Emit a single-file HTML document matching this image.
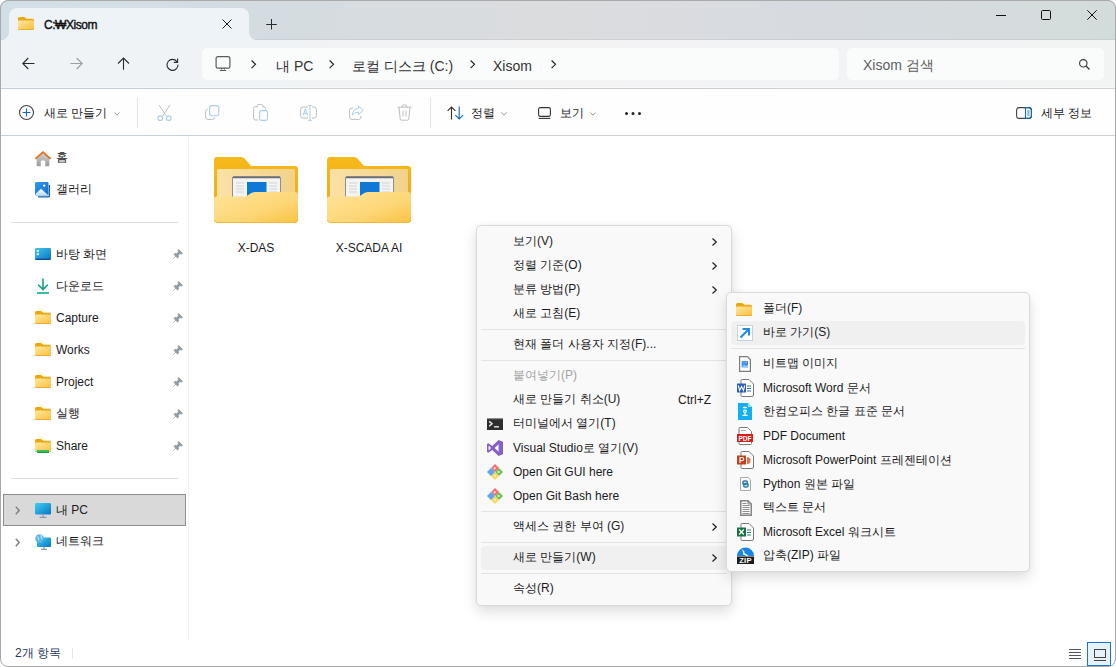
<!DOCTYPE html>
<html><head><meta charset="utf-8">
<style>
*{margin:0;padding:0;box-sizing:border-box}
html,body{width:1116px;height:667px;overflow:hidden;background:#ffffff;font-family:"Liberation Sans",sans-serif;font-size:12px;color:#1b1b1b}
#win{position:absolute;left:0;top:0;width:1116px;height:667px;border-radius:8px;overflow:hidden;background:#fff}
#frame{position:absolute;left:0;top:0;width:1116px;height:667px;border:1px solid #a9a9a9;border-radius:8px;pointer-events:none}
#title{position:absolute;left:0;top:0;width:1116px;height:40px;background:linear-gradient(90deg,#d2dee6 0%,#d4dce1 25%,#dbdcde 50%,#d7dbe1 72%,#d4dcdb 100%)}
#tline{position:absolute;left:0;top:39px;width:1116px;height:1px;background:linear-gradient(90deg,#c4d0d8 0%,#c8cfd4 25%,#cdcdcf 50%,#c9cdd3 72%,#c6cece 100%)}
#tab{position:absolute;left:9px;top:8px;width:240px;height:32px;background:#eef3f7;border-radius:8px 8px 0 0}
#tab:before,#tab:after{content:"";position:absolute;bottom:0;width:8px;height:8px;background:transparent}
#tab:before{left:-8px;border-bottom-right-radius:8px;box-shadow:4px 4px 0 4px #eef3f7}
#tab:after{right:-8px;border-bottom-left-radius:8px;box-shadow:-4px 4px 0 4px #eef3f7}
#nav{position:absolute;left:0;top:40px;width:1116px;height:48px;background:linear-gradient(90deg,#eef3f7 0%,#f0f3f5 25%,#f3f3f4 50%,#f2f3f5 72%,#f2f3f3 100%)}
#nline{position:absolute;left:0;top:88px;width:1116px;height:1px;background:linear-gradient(90deg,#c2cdd5 0%,#c8cfd3 25%,#cccbcc 50%,#cacdd2 72%,#ced3d3 100%);box-shadow:0 -1px 0 rgba(255,255,255,0.4)}
#tool{position:absolute;left:0;top:89px;width:1116px;height:46px;background:#fefefe}
#bline{position:absolute;left:0;top:135px;width:1116px;height:1px;background:linear-gradient(90deg,#c4cfd7 0%,#c9d0d4 25%,#cecdce 50%,#cbcfd3 72%,#ccd2d2 100%)}
.t{position:absolute;white-space:nowrap;line-height:14px;height:14px}
svg{position:absolute;overflow:visible}
.box{position:absolute;background:#fafbfb;border-radius:5px}
.side{position:absolute;left:0;top:135px;width:188px;height:506px;border-right:1px solid #ededed}
.hsep{position:absolute;height:1px;background:#d9d9d9}
.menu{position:absolute;background:#f9f9f9;border:1px solid #dadada;border-radius:5px;box-shadow:0 6px 14px rgba(0,0,0,0.13),0 0 4px rgba(0,0,0,0.03)}
.mi{position:absolute;left:4px;right:4px;height:24px}
.mi.hl{background:#f0f0f0;border-radius:4px}
.mi .t{top:4px}
.msep{position:absolute;left:4px;right:4px;height:1px;background:#e3e3e3}
.chev{position:absolute;width:5px;height:9px}
</style></head><body>
<div id="win">
  <div id="title"></div>
  <div id="tline"></div>
  <div id="tab"></div>
  <!-- tab folder icon -->
  <svg style="left:18px;top:17px" width="16" height="13" viewBox="0 0 16 13">
    <defs><linearGradient id="fg1" x1="0" y1="0" x2="1" y2="1"><stop offset="0" stop-color="#ffe7a2"/><stop offset="1" stop-color="#f8c23e"/></linearGradient></defs>
    <path d="M0,1.5 Q0,0 1.5,0 H5.8 Q6.8,0 7.4,0.7 L8.3,1.7 H14.6 Q16,1.7 16,3.2 V6 H0 Z" fill="#eca80b"/><rect x="0" y="3.4" width="16" height="9.6" rx="1.3" fill="#eaa31c"/><rect x="0" y="3.4" width="16" height="8.8" rx="1.2" fill="url(#fg1)"/>
  </svg>
  <div class="t" style="left:44px;top:18px;font-size:12px;letter-spacing:-0.45px;color:#111;-webkit-text-stroke:0.4px #111">C:₩Xisom</div>
  <svg style="left:222px;top:19px" width="10" height="10" viewBox="0 0 10 10"><path d="M0.5,0.5 L9.5,9.5 M9.5,0.5 L0.5,9.5" stroke="#1c1c1c" stroke-width="1"/></svg>
  <svg style="left:266px;top:19px" width="11" height="11" viewBox="0 0 11 11"><path d="M5.5,0 V10.5 M0.2,5.5 H10.8" stroke="#2a2a2a" stroke-width="1"/></svg>
  <!-- window controls -->
  <svg style="left:996px;top:14px" width="10" height="2" viewBox="0 0 10 2"><path d="M0,1.5 H10" stroke="#111" stroke-width="1"/></svg>
  <svg style="left:1041px;top:10px" width="10" height="10" viewBox="0 0 10 10"><rect x="0.5" y="0.5" width="9" height="9" rx="1" fill="none" stroke="#111" stroke-width="1"/></svg>
  <svg style="left:1087px;top:10px" width="10" height="10" viewBox="0 0 10 10"><path d="M0.3,0.3 L9.7,9.7 M9.7,0.3 L0.3,9.7" stroke="#111" stroke-width="1"/></svg>

  <div id="nav"></div>
  <div id="nline"></div>
  <!-- nav arrows -->
  <svg style="left:22px;top:57px" width="13" height="13" viewBox="0 0 13 13"><path d="M12.5,6.5 H0.8 M6.3,1 L0.8,6.5 L6.3,12" fill="none" stroke="#2b2b2b" stroke-width="1.1"/></svg>
  <svg style="left:70px;top:57px" width="13" height="13" viewBox="0 0 13 13"><path d="M0.5,6.5 H12.2 M6.7,1 L12.2,6.5 L6.7,12" fill="none" stroke="#9a9ea3" stroke-width="1.1"/></svg>
  <svg style="left:117px;top:57px" width="13" height="13" viewBox="0 0 13 13"><path d="M6.5,12.8 V1 M1,6.5 L6.5,1 L12,6.5" fill="none" stroke="#2b2b2b" stroke-width="1.1"/></svg>
  <svg style="left:166px;top:58px" width="13" height="13" viewBox="0 0 13 13"><path d="M11.2,4 A5.5,5.5 0 1 0 12,6.6" fill="none" stroke="#2b2b2b" stroke-width="1.1"/><path d="M11.6,0.6 V4.4 H7.8" fill="none" stroke="#2b2b2b" stroke-width="1.1"/></svg>
  <div class="box" style="left:202px;top:48px;width:637px;height:32px"></div>
  <svg style="left:215px;top:56px" width="16" height="15" viewBox="0 0 16 15"><rect x="1.1" y="0.6" width="13.8" height="11.6" rx="1.8" fill="none" stroke="#5a5a5a" stroke-width="1.2"/><path d="M6.6,12 V13.6 M9.4,12 V13.6" stroke="#5a5a5a" stroke-width="1.1"/><path d="M4.8,14.5 H11.2" stroke="#5a5a5a" stroke-width="1.1"/></svg>
  <svg class="chev" style="left:251px;top:60px;width:5px;height:9px" viewBox="0 0 5 9"><path d="M0.6,0.5 L4.5,4.3 L0.6,8.1" fill="none" stroke="#222" stroke-width="1.15"/></svg>
  <div class="t" style="left:276px;top:58px;font-size:14px;line-height:16px;height:16px;color:#333">내 PC</div>
  <svg class="chev" style="left:329px;top:60px;width:5px;height:9px" viewBox="0 0 5 9"><path d="M0.6,0.5 L4.5,4.3 L0.6,8.1" fill="none" stroke="#222" stroke-width="1.15"/></svg>
  <div class="t" style="left:352px;top:58px;font-size:14px;line-height:16px;height:16px;color:#333">로컬 디스크 (C:)</div>
  <svg class="chev" style="left:470px;top:60px;width:5px;height:9px" viewBox="0 0 5 9"><path d="M0.6,0.5 L4.5,4.3 L0.6,8.1" fill="none" stroke="#222" stroke-width="1.15"/></svg>
  <div class="t" style="left:493px;top:58px;font-size:14px;line-height:16px;height:16px;color:#333">Xisom</div>
  <svg class="chev" style="left:551px;top:60px;width:5px;height:9px" viewBox="0 0 5 9"><path d="M0.6,0.5 L4.5,4.3 L0.6,8.1" fill="none" stroke="#222" stroke-width="1.15"/></svg>
  <div class="box" style="left:847px;top:48px;width:257px;height:32px"></div>
  <div class="t" style="left:863px;top:57px;font-size:14px;line-height:16px;height:16px;color:#606060">Xisom 검색</div>
  <svg style="left:1079px;top:59px" width="11" height="11" viewBox="0 0 11 11"><circle cx="4.3" cy="4.3" r="3.7" fill="none" stroke="#333" stroke-width="1.1"/><path d="M7,7 L10.5,10.5" stroke="#333" stroke-width="1.2"/></svg>

  <div id="tool"></div>
  <div id="bline"></div>
  <!-- toolbar -->
  <svg style="left:19px;top:105px" width="16" height="16" viewBox="0 0 16 16"><circle cx="7.5" cy="7.5" r="7" fill="none" stroke="#444" stroke-width="1.1"/><path d="M7.5,3.6 V11.4 M3.6,7.5 H11.4" stroke="#0f6cbd" stroke-width="1.15"/></svg>
  <div class="t" style="left:44px;top:106px">새로 만들기</div>
  <svg style="left:114px;top:112px" width="6" height="4" viewBox="0 0 6 4"><path d="M0.4,0.5 L3,3.2 L5.6,0.5" fill="none" stroke="#8a8a8a" stroke-width="0.9"/></svg>
  <div style="position:absolute;left:137px;top:97px;width:1px;height:31px;background:#e6e6e6"></div>
  <!-- cut -->
  <svg style="left:157px;top:105px" width="15" height="16" viewBox="0 0 15 16"><path d="M2,0 L9.3,11 M13,0 L5.7,11" stroke="#bdbdbd" stroke-width="1"/><circle cx="3.2" cy="13.2" r="2.3" fill="none" stroke="#a9cdee" stroke-width="1.1"/><circle cx="11.8" cy="13.2" r="2.3" fill="none" stroke="#a9cdee" stroke-width="1.1"/></svg>
  <!-- copy -->
  <svg style="left:205px;top:105px" width="15" height="15" viewBox="0 0 15 15"><path d="M2.8,4 Q0.6,4.2 0.6,6.5 V12 Q0.6,14.4 3,14.4 H7.5 Q9.6,14.4 10,12.3" fill="none" stroke="#bdbdbd" stroke-width="1"/><rect x="4.6" y="0.6" width="9.2" height="10.2" rx="2.2" fill="none" stroke="#a9cdee" stroke-width="1.1"/></svg>
  <!-- paste -->
  <svg style="left:253px;top:104px" width="15" height="17" viewBox="0 0 15 17"><path d="M3.5,2.5 H2.5 Q0.6,2.5 0.6,4.5 V14 Q0.6,16 2.5,16 H5 M10.5,2.5 Q12.5,2.5 12.5,4.5 V5.5 M4,3.5 V1.8 Q4,0.6 5.2,0.6 H8.8 Q10,0.6 10,1.8 V3.5" fill="none" stroke="#bdbdbd" stroke-width="1"/><rect x="6.6" y="6.6" width="7.8" height="9.8" rx="1.8" fill="none" stroke="#a9cdee" stroke-width="1.1"/></svg>
  <!-- rename -->
  <svg style="left:300px;top:105px" width="17" height="16" viewBox="0 0 17 16"><path d="M8,2 H3 Q0.6,2 0.6,4.4 V10.6 Q0.6,13 3,13 H8 M12,2 H14 Q16.4,2 16.4,4.4 V10.6 Q16.4,13 14,13 H12" fill="none" stroke="#bdbdbd" stroke-width="1"/><path d="M10,0.6 V15.4 M8.3,0.6 H11.7 M8.3,15.4 H11.7 M3,10.5 L5.4,4 L7.8,10.5 M3.9,8.3 H6.9" fill="none" stroke="#a9cdee" stroke-width="1"/></svg>
  <!-- share -->
  <svg style="left:349px;top:105px" width="15" height="15" viewBox="0 0 15 15"><path d="M4,3 H3 Q0.6,3 0.6,5.4 V12 Q0.6,14.4 3,14.4 H9.6 Q12,14.4 12,12 V11" fill="none" stroke="#bdbdbd" stroke-width="1"/><path d="M9.5,1 L14.2,5.4 L9.5,9.6 V7.3 Q5,7 3.2,10.2 Q3.8,3.8 9.5,3.6 Z" fill="none" stroke="#a9cdee" stroke-width="1"/></svg>
  <!-- delete -->
  <svg style="left:397px;top:104px" width="15" height="17" viewBox="0 0 15 17"><path d="M0.6,3.2 H14.4 M5,3 Q5,0.8 7.5,0.8 Q10,0.8 10,3 M2,3.2 L3.2,15 Q3.4,16.2 4.6,16.2 H10.4 Q11.6,16.2 11.8,15 L13,3.2 M6,6.5 V12.5 M9,6.5 V12.5" fill="none" stroke="#bdbdbd" stroke-width="1"/></svg>
  <div style="position:absolute;left:430px;top:97px;width:1px;height:31px;background:#e6e6e6"></div>
  <!-- sort -->
  <svg style="left:447px;top:106px" width="17" height="14" viewBox="0 0 17 14"><path d="M4.5,13.5 V1 M0.6,4.9 L4.5,1 L8.4,4.9" fill="none" stroke="#333" stroke-width="1.1"/><path d="M12.2,0.5 V13 M8.3,9.1 L12.2,13 L16.1,9.1" fill="none" stroke="#0f6cbd" stroke-width="1.1"/></svg>
  <div class="t" style="left:471px;top:106px">정렬</div>
  <svg style="left:501px;top:112px" width="6" height="4" viewBox="0 0 6 4"><path d="M0.4,0.5 L3,3.2 L5.6,0.5" fill="none" stroke="#8a8a8a" stroke-width="0.9"/></svg>
  <!-- view -->
  <svg style="left:538px;top:107px" width="13" height="12" viewBox="0 0 13 12"><rect x="0.6" y="0.6" width="11.8" height="8.8" rx="1.6" fill="none" stroke="#333" stroke-width="1.1"/><path d="M0.8,11.4 H12.2" stroke="#333" stroke-width="1.1"/></svg>
  <div class="t" style="left:560px;top:106px">보기</div>
  <svg style="left:590px;top:112px" width="6" height="4" viewBox="0 0 6 4"><path d="M0.4,0.5 L3,3.2 L5.6,0.5" fill="none" stroke="#8a8a8a" stroke-width="0.9"/></svg>
  <svg style="left:625px;top:112px" width="16" height="3" viewBox="0 0 16 3"><circle cx="1.5" cy="1.5" r="1.5" fill="#222"/><circle cx="8" cy="1.5" r="1.5" fill="#222"/><circle cx="14.5" cy="1.5" r="1.5" fill="#222"/></svg>
  <!-- details -->
  <svg style="left:1016px;top:107px" width="16" height="12" viewBox="0 0 16 12"><rect x="0.6" y="0.6" width="14.8" height="10.8" rx="2.4" fill="none" stroke="#444" stroke-width="1.1"/><path d="M9.5,0.6 H13 Q15.4,0.6 15.4,3 V9 Q15.4,11.4 13,11.4 H9.5 Z" fill="none" stroke="#0f6cbd" stroke-width="1.1"/><path d="M11.2,4 H13.6 M11.2,6 H13.6 M11.2,8 H13.6" stroke="#0f6cbd" stroke-width="0.9"/></svg>
  <div class="t" style="left:1041px;top:106px">세부 정보</div>
  <!-- sidebar -->
  <div style="position:absolute;left:188px;top:137px;width:1px;height:504px;background:#f2f2f2"></div>
  <svg style="left:35px;top:151px" width="16" height="16" viewBox="0 0 16 16">
    <defs><linearGradient id="hg" x1="0" y1="0" x2="0" y2="1"><stop offset="0" stop-color="#d2d2d2"/><stop offset="1" stop-color="#9c9c9c"/></linearGradient></defs>
    <path d="M1.6,7 L8,1.6 L14.4,7 V14.2 Q14.4,15.2 13.4,15.2 H10.2 V10.6 Q10.2,9.6 9.2,9.6 H6.8 Q5.8,9.6 5.8,10.6 V15.2 H2.6 Q1.6,15.2 1.6,14.2 Z" fill="url(#hg)"/>
    <path d="M0.9,7.4 L8,1.1 L15.1,7.4" fill="none" stroke="#e8731c" stroke-width="1.9" stroke-linecap="round" stroke-linejoin="round"/>
  </svg>
  <div class="t" style="left:56px;top:150px">홈</div>
  <svg style="left:35px;top:182px" width="16" height="16" viewBox="0 0 16 16">
    <defs><linearGradient id="gg" x1="0" y1="0" x2="1" y2="1"><stop offset="0" stop-color="#2f9cf0"/><stop offset="1" stop-color="#1368c4"/></linearGradient>
    <linearGradient id="gm" x1="0" y1="0" x2="0" y2="1"><stop offset="0" stop-color="#ffffff"/><stop offset="1" stop-color="#b9dcf7"/></linearGradient></defs>
    <path d="M15,3 V14 Q15,15.5 13.5,15.5 H3 V14.2 H13.2 Q13.8,14.2 13.8,13.6 V3 Z" fill="#1560b8"/>
    <rect x="0" y="0" width="13.5" height="13.5" rx="1.2" fill="url(#gg)"/>
    <path d="M0.5,12 L6,6.8 L12.8,12.8 V13.5 H0.5 Z" fill="url(#gm)"/>
    <circle cx="9.2" cy="3.6" r="1.2" fill="#fff"/>
  </svg>
  <div class="t" style="left:56px;top:182px">갤러리</div>
  <div class="hsep" style="left:11px;top:222px;width:167px;background:#dcdcdc"></div>

  <svg style="left:35px;top:248px" width="16" height="12" viewBox="0 0 16 12">
    <defs><linearGradient id="dg" x1="0" y1="0" x2="1" y2="1"><stop offset="0" stop-color="#41c6ec"/><stop offset="1" stop-color="#0e72c6"/></linearGradient></defs>
    <rect x="0" y="0" width="16" height="12" rx="1.4" fill="url(#dg)"/>
    <rect x="0.5" y="10.6" width="15" height="1.4" fill="#0b4f93"/>
    <rect x="1.8" y="2" width="2" height="2" fill="#f2fbff"/><rect x="1.8" y="5.2" width="2" height="2" fill="#f2fbff"/>
  </svg>
  <div class="t" style="left:56px;top:247px">바탕 화면</div>
  <svg style="left:37px;top:278px" width="12" height="16" viewBox="0 0 12 16"><path d="M6,0.5 V11.5 M1.2,6.8 L6,11.6 L10.8,6.8" fill="none" stroke="#16a085" stroke-width="1.6"/><path d="M0,15 H12" stroke="#1db993" stroke-width="1.8"/></svg>
  <div class="t" style="left:56px;top:279px">다운로드</div>

  <svg style="left:35px;top:311px" width="16" height="13" viewBox="0 0 16 13"><path d="M0,1.5 Q0,0 1.5,0 H5.8 Q6.8,0 7.4,0.7 L8.3,1.7 H14.6 Q16,1.7 16,3.2 V6 H0 Z" fill="#eca80b"/><rect x="0" y="3.4" width="16" height="9.6" rx="1.3" fill="#eaa31c"/><rect x="0" y="3.4" width="16" height="8.8" rx="1.2" fill="url(#fg1)"/></svg>
  <div class="t" style="left:56px;top:311px">Capture</div>
  <svg style="left:35px;top:343px" width="16" height="13" viewBox="0 0 16 13"><path d="M0,1.5 Q0,0 1.5,0 H5.8 Q6.8,0 7.4,0.7 L8.3,1.7 H14.6 Q16,1.7 16,3.2 V6 H0 Z" fill="#eca80b"/><rect x="0" y="3.4" width="16" height="9.6" rx="1.3" fill="#eaa31c"/><rect x="0" y="3.4" width="16" height="8.8" rx="1.2" fill="url(#fg1)"/></svg>
  <div class="t" style="left:56px;top:343px">Works</div>
  <svg style="left:35px;top:375px" width="16" height="13" viewBox="0 0 16 13"><path d="M0,1.5 Q0,0 1.5,0 H5.8 Q6.8,0 7.4,0.7 L8.3,1.7 H14.6 Q16,1.7 16,3.2 V6 H0 Z" fill="#eca80b"/><rect x="0" y="3.4" width="16" height="9.6" rx="1.3" fill="#eaa31c"/><rect x="0" y="3.4" width="16" height="8.8" rx="1.2" fill="url(#fg1)"/></svg>
  <div class="t" style="left:56px;top:375px">Project</div>
  <svg style="left:35px;top:407px" width="16" height="13" viewBox="0 0 16 13"><path d="M0,1.5 Q0,0 1.5,0 H5.8 Q6.8,0 7.4,0.7 L8.3,1.7 H14.6 Q16,1.7 16,3.2 V6 H0 Z" fill="#eca80b"/><rect x="0" y="3.4" width="16" height="9.6" rx="1.3" fill="#eaa31c"/><rect x="0" y="3.4" width="16" height="8.8" rx="1.2" fill="url(#fg1)"/></svg>
  <div class="t" style="left:56px;top:406px">실행</div>
  <svg style="left:35px;top:439px" width="16" height="14" viewBox="0 0 16 14"><path d="M0,1.5 Q0,0 1.5,0 H5.8 Q6.8,0 7.4,0.7 L8.3,1.7 H14.6 Q16,1.7 16,3.2 V6 H0 Z" fill="#eca80b"/><rect x="0" y="3.4" width="16" height="9.6" rx="1.3" fill="#eaa31c"/><rect x="0" y="3.4" width="16" height="8.8" rx="1.2" fill="url(#fg1)"/><rect x="0" y="12.2" width="16" height="0.8" fill="#bdbdbd"/><rect x="2" y="11" width="12" height="3" rx="0.8" fill="#35c45a"/><rect x="2" y="12.8" width="12" height="1.2" fill="#1f9b3e"/></svg>
  <div class="t" style="left:56px;top:439px">Share</div>
  <!-- pins -->
  <svg style="left:173px;top:249px" width="10" height="10" viewBox="0 0 10 10"><path d="M5.6,0.4 L9.6,4.4 L8.4,5 L6.8,4.6 L5.2,6.6 L5.4,8.4 L4.6,9 L1,5.4 L1.6,4.6 L3.4,4.8 L5.4,3.2 L5,1.6 Z M3,7 L0.4,9.6" fill="#8e9ba4" stroke="#8e9ba4" stroke-width="0.8" stroke-linejoin="round"/></svg>
  <svg style="left:173px;top:281px" width="10" height="10" viewBox="0 0 10 10"><path d="M5.6,0.4 L9.6,4.4 L8.4,5 L6.8,4.6 L5.2,6.6 L5.4,8.4 L4.6,9 L1,5.4 L1.6,4.6 L3.4,4.8 L5.4,3.2 L5,1.6 Z M3,7 L0.4,9.6" fill="#8e9ba4" stroke="#8e9ba4" stroke-width="0.8" stroke-linejoin="round"/></svg>
  <svg style="left:173px;top:313px" width="10" height="10" viewBox="0 0 10 10"><path d="M5.6,0.4 L9.6,4.4 L8.4,5 L6.8,4.6 L5.2,6.6 L5.4,8.4 L4.6,9 L1,5.4 L1.6,4.6 L3.4,4.8 L5.4,3.2 L5,1.6 Z M3,7 L0.4,9.6" fill="#8e9ba4" stroke="#8e9ba4" stroke-width="0.8" stroke-linejoin="round"/></svg>
  <svg style="left:173px;top:345px" width="10" height="10" viewBox="0 0 10 10"><path d="M5.6,0.4 L9.6,4.4 L8.4,5 L6.8,4.6 L5.2,6.6 L5.4,8.4 L4.6,9 L1,5.4 L1.6,4.6 L3.4,4.8 L5.4,3.2 L5,1.6 Z M3,7 L0.4,9.6" fill="#8e9ba4" stroke="#8e9ba4" stroke-width="0.8" stroke-linejoin="round"/></svg>
  <svg style="left:173px;top:377px" width="10" height="10" viewBox="0 0 10 10"><path d="M5.6,0.4 L9.6,4.4 L8.4,5 L6.8,4.6 L5.2,6.6 L5.4,8.4 L4.6,9 L1,5.4 L1.6,4.6 L3.4,4.8 L5.4,3.2 L5,1.6 Z M3,7 L0.4,9.6" fill="#8e9ba4" stroke="#8e9ba4" stroke-width="0.8" stroke-linejoin="round"/></svg>
  <svg style="left:173px;top:409px" width="10" height="10" viewBox="0 0 10 10"><path d="M5.6,0.4 L9.6,4.4 L8.4,5 L6.8,4.6 L5.2,6.6 L5.4,8.4 L4.6,9 L1,5.4 L1.6,4.6 L3.4,4.8 L5.4,3.2 L5,1.6 Z M3,7 L0.4,9.6" fill="#8e9ba4" stroke="#8e9ba4" stroke-width="0.8" stroke-linejoin="round"/></svg>
  <svg style="left:173px;top:441px" width="10" height="10" viewBox="0 0 10 10"><path d="M5.6,0.4 L9.6,4.4 L8.4,5 L6.8,4.6 L5.2,6.6 L5.4,8.4 L4.6,9 L1,5.4 L1.6,4.6 L3.4,4.8 L5.4,3.2 L5,1.6 Z M3,7 L0.4,9.6" fill="#8e9ba4" stroke="#8e9ba4" stroke-width="0.8" stroke-linejoin="round"/></svg>
  <div class="hsep" style="left:11px;top:478px;width:167px;background:#dcdcdc"></div>

  <div style="position:absolute;left:3px;top:494px;width:183px;height:32px;background:#d9d9d9;border:1px solid #8e8e8e"></div>
  <svg class="chev" style="left:15px;top:506px" viewBox="0 0 5 9"><path d="M0.8,0.8 L4.2,4.5 L0.8,8.2" fill="none" stroke="#7e7e7e" stroke-width="1.4"/></svg>
  <svg style="left:35px;top:503px" width="16" height="15" viewBox="0 0 16 15">
    <defs><linearGradient id="mg" x1="0" y1="0" x2="1" y2="1"><stop offset="0" stop-color="#3fd0f0"/><stop offset="1" stop-color="#0a74c9"/></linearGradient></defs>
    <rect x="0" y="0" width="16" height="11.5" rx="1.2" fill="url(#mg)"/><path d="M8,11.5 V14 M4.5,14.4 H11.5" stroke="#8a9aa6" stroke-width="1.2"/>
  </svg>
  <div class="t" style="left:56px;top:503px">내 PC</div>
  <svg class="chev" style="left:15px;top:538px" viewBox="0 0 5 9"><path d="M0.8,0.8 L4.2,4.5 L0.8,8.2" fill="none" stroke="#7e7e7e" stroke-width="1.4"/></svg>
  <svg style="left:35px;top:534px" width="16" height="16" viewBox="0 0 16 16">
    <rect x="2" y="3.5" width="14" height="9.5" rx="1" fill="url(#mg)"/><path d="M9,13 V15 M6,15.4 H12" stroke="#8a9aa6" stroke-width="1.2"/>
    <circle cx="4.5" cy="4.5" r="4.3" fill="#5fb6e8"/><path d="M2,2.5 Q4,4 3.5,6 M6,1 Q5.5,3.5 7.5,5" fill="none" stroke="#d8eefa" stroke-width="1"/>
  </svg>
  <div class="t" style="left:56px;top:534px">네트워크</div>

  <!-- status bar -->
  <div class="t" style="left:15px;top:646px;color:#1f3a5a">2개 항목</div>
  <div style="position:absolute;left:72px;top:648px;width:1px;height:11px;background:#e6e6e6"></div>
  <svg style="left:1069px;top:649px" width="12" height="10" viewBox="0 0 12 10"><path d="M0,0.5 H12 M0,3.5 H12 M0,6.5 H12 M0,9.5 H12" stroke="#555" stroke-width="1"/></svg>
  <div style="position:absolute;left:1087px;top:642px;width:24px;height:24px;background:#e5f1fb;border:1px solid #0f78d4"></div>
  <svg style="left:1094px;top:649px" width="12" height="12" viewBox="0 0 12 12"><rect x="0.5" y="0.5" width="11" height="8" fill="none" stroke="#444" stroke-width="1"/><path d="M0,11.5 H12" stroke="#444" stroke-width="1"/></svg>
  <!-- big folders -->
  <svg width="0" height="0" style="position:absolute">
    <defs>
      <linearGradient id="bfb" x1="0" y1="0" x2="0" y2="1"><stop offset="0" stop-color="#f6b91b"/><stop offset="1" stop-color="#eeaa12"/></linearGradient>
      <linearGradient id="bpp" x1="0" y1="0" x2="1" y2="0"><stop offset="0" stop-color="#fbe1a6"/><stop offset="1" stop-color="#f2d28a"/></linearGradient>
      <linearGradient id="bff" x1="0" y1="0" x2="1" y2="1"><stop offset="0" stop-color="#ffe49a"/><stop offset="0.6" stop-color="#fdd676"/><stop offset="1" stop-color="#f8c343"/></linearGradient>
      
    </defs>
  </svg>
  <svg style="left:214px;top:157px" width="84" height="66" viewBox="0 0 84 66">
        <path d="M0,3 Q0,0 3,0 H27 Q29,0 30.5,1.5 L37,9 H81 Q84,9 84,12 V60 H0 Z" fill="url(#bfb)"/>
        <rect x="3" y="12" width="78" height="40" rx="1.5" fill="url(#bpp)"/>
        <rect x="18.5" y="19.5" width="48" height="28" rx="1.5" fill="#f3f3f3" stroke="#8f8f8f" stroke-width="1"/>
        <path d="M19,20.5 H66" stroke="#6c6c6c" stroke-width="1.5"/>
        <rect x="33" y="25" width="19.5" height="16" fill="#0f78d4"/>
        <path d="M22,26 H30 M22,29 H30 M22,32 H30 M22,35 H30 M55,26 H63 M55,29 H63 M55,32 H63 M55,35 H63" stroke="#d4d4d4" stroke-width="1.2"/>
        <path d="M0,42 Q0,39.5 2.5,39.5 H30 Q33,39.5 35,37.5 Q37.5,35 41,35 H81 Q84,35 84,38 V62.5 Q84,65.5 81,65.5 H3 Q0,65.5 0,62.5 Z" fill="url(#bff)"/>
        <path d="M0.5,63 Q1,65.5 3,65.5 H81 Q83.5,65.5 84,63" fill="none" stroke="#f0b73a" stroke-width="1"/>
      </svg>
  <svg style="left:327px;top:157px" width="84" height="66" viewBox="0 0 84 66">
        <path d="M0,3 Q0,0 3,0 H27 Q29,0 30.5,1.5 L37,9 H81 Q84,9 84,12 V60 H0 Z" fill="url(#bfb)"/>
        <rect x="3" y="12" width="78" height="40" rx="1.5" fill="url(#bpp)"/>
        <rect x="18.5" y="19.5" width="48" height="28" rx="1.5" fill="#f3f3f3" stroke="#8f8f8f" stroke-width="1"/>
        <path d="M19,20.5 H66" stroke="#6c6c6c" stroke-width="1.5"/>
        <rect x="33" y="25" width="19.5" height="16" fill="#0f78d4"/>
        <path d="M22,26 H30 M22,29 H30 M22,32 H30 M22,35 H30 M55,26 H63 M55,29 H63 M55,32 H63 M55,35 H63" stroke="#d4d4d4" stroke-width="1.2"/>
        <path d="M0,42 Q0,39.5 2.5,39.5 H30 Q33,39.5 35,37.5 Q37.5,35 41,35 H81 Q84,35 84,38 V62.5 Q84,65.5 81,65.5 H3 Q0,65.5 0,62.5 Z" fill="url(#bff)"/>
        <path d="M0.5,63 Q1,65.5 3,65.5 H81 Q83.5,65.5 84,63" fill="none" stroke="#f0b73a" stroke-width="1"/>
      </svg>
  <div class="t" style="left:206px;top:241px;width:100px;text-align:center">X-DAS</div>
  <div class="t" style="left:319px;top:241px;width:100px;text-align:center">X-SCADA AI</div>
  <!-- context menu -->
  <div class="menu" style="left:476px;top:225px;width:256px;height:381px">
    <div class="mi" style="top:4px"><div class="t" style="left:32px">보기(V)</div><svg class="chev" style="left:231px;top:8px;width:5px;height:8px" viewBox="0 0 5 8"><path d="M0.5,0.5 L4.3,4 L0.5,7.5" fill="none" stroke="#1a1a1a" stroke-width="1.15"/></svg></div>
    <div class="mi" style="top:28px"><div class="t" style="left:32px">정렬 기준(O)</div><svg class="chev" style="left:231px;top:8px;width:5px;height:8px" viewBox="0 0 5 8"><path d="M0.5,0.5 L4.3,4 L0.5,7.5" fill="none" stroke="#1a1a1a" stroke-width="1.15"/></svg></div>
    <div class="mi" style="top:52px"><div class="t" style="left:32px">분류 방법(P)</div><svg class="chev" style="left:231px;top:8px;width:5px;height:8px" viewBox="0 0 5 8"><path d="M0.5,0.5 L4.3,4 L0.5,7.5" fill="none" stroke="#1a1a1a" stroke-width="1.15"/></svg></div>
    <div class="mi" style="top:76px"><div class="t" style="left:32px">새로 고침(E)</div></div>
    <div class="msep" style="top:103px"></div>
    <div class="mi" style="top:107px"><div class="t" style="left:32px">현재 폴더 사용자 지정(F)...</div></div>
    <div class="msep" style="top:134px"></div>
    <div class="mi" style="top:138px"><div class="t" style="left:32px;color:#a3a3a3">붙여넣기(P)</div></div>
    <div class="mi" style="top:162px"><div class="t" style="left:32px">새로 만들기 취소(U)</div><div class="t" style="right:16px;top:5px">Ctrl+Z</div></div>
    <div class="mi" style="top:186px"><svg style="left:6px;top:6px" width="16" height="12" viewBox="0 0 16 12"><rect x="0" y="0" width="16" height="12" fill="#2e2e2e"/><rect x="0" y="0" width="16" height="1.2" fill="#8c8c8c"/><path d="M2.2,3.4 L5,5.8 L2.2,8.2" fill="none" stroke="#e8e8e8" stroke-width="1.5"/><path d="M7,8.8 H12" stroke="#e8e8e8" stroke-width="1.4"/></svg><div class="t" style="left:32px">터미널에서 열기(T)</div></div>
    <div class="mi" style="top:210px"><svg style="left:6px;top:4px" width="16" height="16" viewBox="0 0 16 16"><path d="M11.6,0 L16,1.8 V14.2 L11.6,16 L5.2,9.9 L1.4,12.8 L0,12.1 V3.9 L1.4,3.2 L5.2,6.1 Z M11.6,4.2 L7.6,8 L11.6,11.8 Z M1.6,5.4 V10.6 L4,8 Z" fill="#8661c5" fill-rule="evenodd"/></svg><div class="t" style="left:32px;top:5px">Visual Studio로 열기(V)</div></div>
    <div class="mi" style="top:234px"><svg style="left:6px;top:4px" width="16" height="16" viewBox="0 0 16 16"><path d="M8,0 L12,4 L8,8 L4,4 Z" fill="#f46d6d"/><path d="M12,4 L16,8 L12,12 L8,8 Z" fill="#6cc24a"/><path d="M8,8 L12,12 L8,16 L4,12 Z" fill="#fcd65a"/><path d="M4,4 L8,8 L4,12 L0,8 Z" fill="#5ea4f2"/><circle cx="7.6" cy="4.2" r="1" fill="#fff"/><circle cx="11.6" cy="8" r="1" fill="#fff"/><circle cx="8" cy="11.8" r="0.9" fill="#fff"/></svg><div class="t" style="left:32px;top:5px">Open Git GUI here</div></div>
    <div class="mi" style="top:258px"><svg style="left:6px;top:4px" width="16" height="16" viewBox="0 0 16 16"><path d="M8,0 L12,4 L8,8 L4,4 Z" fill="#f46d6d"/><path d="M12,4 L16,8 L12,12 L8,8 Z" fill="#6cc24a"/><path d="M8,8 L12,12 L8,16 L4,12 Z" fill="#fcd65a"/><path d="M4,4 L8,8 L4,12 L0,8 Z" fill="#5ea4f2"/><circle cx="7.6" cy="4.2" r="1" fill="#fff"/><circle cx="11.6" cy="8" r="1" fill="#fff"/><circle cx="8" cy="11.8" r="0.9" fill="#fff"/></svg><div class="t" style="left:32px;top:5px">Open Git Bash here</div></div>
    <div class="msep" style="top:285px"></div>
    <div class="mi" style="top:289px"><div class="t" style="left:32px">액세스 권한 부여 (G)</div><svg class="chev" style="left:231px;top:8px;width:5px;height:8px" viewBox="0 0 5 8"><path d="M0.5,0.5 L4.3,4 L0.5,7.5" fill="none" stroke="#1a1a1a" stroke-width="1.15"/></svg></div>
    <div class="msep" style="top:316px"></div>
    <div class="mi hl" style="top:320px"><div class="t" style="left:32px">새로 만들기(W)</div><svg class="chev" style="left:231px;top:8px;width:5px;height:8px" viewBox="0 0 5 8"><path d="M0.5,0.5 L4.3,4 L0.5,7.5" fill="none" stroke="#1a1a1a" stroke-width="1.15"/></svg></div>
    <div class="msep" style="top:347px"></div>
    <div class="mi" style="top:351px"><div class="t" style="left:32px">속성(R)</div></div>
  </div>
  <!-- submenu -->
  <div class="menu" style="left:726px;top:292px;width:304px;height:280px">
    <div class="mi" style="top:4px"><svg style="left:5px;top:6px" width="16" height="13" viewBox="0 0 16 13"><path d="M0,1.5 Q0,0 1.5,0 H5.8 Q6.8,0 7.4,0.7 L8.3,1.7 H14.6 Q16,1.7 16,3.2 V6 H0 Z" fill="#eca80b"/><rect x="0" y="3.4" width="16" height="9.6" rx="1.3" fill="#eaa31c"/><rect x="0" y="3.4" width="16" height="8.8" rx="1.2" fill="url(#fg1)"/></svg><div class="t" style="left:32px">폴더(F)</div></div>
    <div class="mi hl" style="top:28px"><svg style="left:6px;top:4px" width="16" height="16" viewBox="0 0 16 16"><rect x="0.5" y="0.5" width="15" height="15" fill="#fff" stroke="#c8d0dc" stroke-width="1"/><path d="M3.5,12.5 L11.5,4.5 M5.5,4 H12 V10.5" fill="none" stroke="#1e88e5" stroke-width="2"/></svg><div class="t" style="left:32px">바로 가기(S)</div></div>
    <div class="msep" style="top:55px"></div>
    <div class="mi" style="top:59px"><svg style="left:8px;top:4px" width="12" height="16" viewBox="0 0 12 16"><defs><linearGradient id="bm" x1="0" y1="0" x2="1" y2="1"><stop offset="0" stop-color="#4cb0f5"/><stop offset="1" stop-color="#2a6fd6"/></linearGradient></defs><path d="M0.6,0.6 H8.4 L11.4,3.6 V15.4 H0.6 Z" fill="#fff" stroke="#7c7c7c" stroke-width="1.2"/><rect x="2.6" y="5" width="6.4" height="6.4" fill="url(#bm)"/><path d="M2.6,11.4 L5.2,8.6 L7,10 L9,8.4 V11.4 Z" fill="#8fd0ff"/><circle cx="7.4" cy="6.6" r="0.8" fill="#ff9ad0"/></svg><div class="t" style="left:32px">비트맵 이미지</div></div>
    <div class="mi" style="top:83px"><svg style="left:6px;top:3px" width="17" height="18" viewBox="0 0 17 18"><path d="M5,0.5 H12 L16.5,5 V16 Q16.5,17.5 15,17.5 H5 Q4,17.5 4,16.5 V1.5 Q4,0.5 5,0.5 Z" fill="#fff" stroke="#7a7a7a" stroke-width="1"/><path d="M10,7 H14 M10,9.5 H14 M10,12 H14" stroke="#2b6cc4" stroke-width="1.1"/><rect x="0" y="4.5" width="9" height="9" fill="#2b5eb7"/><path d="M1.3,6.5 L2.6,11.5 L4.5,7.5 L6.4,11.5 L7.7,6.5" fill="none" stroke="#fff" stroke-width="1.1"/></svg><div class="t" style="left:32px;top:5px">Microsoft Word 문서</div></div>
    <div class="mi" style="top:107px"><svg style="left:7px;top:3px" width="14" height="17" viewBox="0 0 14 17"><path d="M0,0 H10 L14,4 V17 H0 Z" fill="#12b0ee"/><path d="M10,0 V4 H14 Z" fill="#9fe0fa"/><path d="M5,4.6 H9 M7,3.4 V4.6 M5.6,8.2 A1.4,1.2 0 1 0 8.4,8.2 A1.4,1.2 0 1 0 5.6,8.2 M7,9.6 V11.8 M4.4,12.4 H9.6" fill="none" stroke="#fff" stroke-width="1.2"/></svg><div class="t" style="left:32px">한컴오피스 한글 표준 문서</div></div>
    <div class="mi" style="top:131px"><svg style="left:6px;top:3px" width="16" height="18" viewBox="0 0 16 18"><path d="M3,0.5 H10.5 L14.5,4.5 V16.5 Q14.5,17.5 13.5,17.5 H3 Q2,17.5 2,16.5 V1.5 Q2,0.5 3,0.5 Z" fill="#fff" stroke="#7a7a7a" stroke-width="1"/><path d="M4,3.5 H9" stroke="#aaa" stroke-width="1"/><rect x="0" y="7" width="16" height="8" fill="#d81b1b"/><text x="8" y="13.6" font-family="Liberation Sans" font-size="6.6" font-weight="bold" fill="#fff" text-anchor="middle">PDF</text></svg><div class="t" style="left:32px;top:5px">PDF Document</div></div>
    <div class="mi" style="top:155px"><svg style="left:6px;top:3px" width="17" height="18" viewBox="0 0 17 18"><path d="M5,0.5 H12 L16.5,5 V16 Q16.5,17.5 15,17.5 H5 Q4,17.5 4,16.5 V1.5 Q4,0.5 5,0.5 Z" fill="#fff" stroke="#7a7a7a" stroke-width="1"/><path d="M10,6 A3.5,3.5 0 1 1 10,13 Z" fill="#ed6c47"/><rect x="0" y="4.5" width="9" height="9" fill="#c43e1c"/><path d="M3,12 V6.5 H5 Q6.6,6.5 6.6,8.2 Q6.6,9.8 5,9.8 H3" fill="none" stroke="#fff" stroke-width="1.1"/></svg><div class="t" style="left:32px;top:5px">Microsoft PowerPoint 프레젠테이션</div></div>
    <div class="mi" style="top:179px"><svg style="left:9px;top:5px" width="11" height="14" viewBox="0 0 11 14"><path d="M0.5,0.5 H8.3 L10.5,2.7 V13.5 H0.5 Z" fill="#fbfbfb" stroke="#a9a9a9" stroke-width="1"/><path d="M3,7.2 V5.2 Q3,4 4.2,4 H6.2 Q7.2,4 7.2,5 V6.6 H4.6 Q3.4,6.6 3.4,7.8" fill="none" stroke="#3478a8" stroke-width="1.5"/><path d="M8,6.8 V8.8 Q8,10 6.8,10 H4.8 Q3.8,10 3.8,9 V7.4 H6.4 Q7.6,7.4 7.6,6.2" fill="none" stroke="#2d86a8" stroke-width="1.5"/></svg><div class="t" style="left:32px;top:5px">Python 원본 파일</div></div>
    <div class="mi" style="top:203px"><svg style="left:9px;top:4px" width="12" height="16" viewBox="0 0 12 16"><path d="M0.75,0.75 H8 L11.25,4 V15.25 H0.75 Z" fill="#fafafa" stroke="#858585" stroke-width="1.5"/><path d="M8,0.75 V4 H11.25" fill="none" stroke="#858585" stroke-width="1"/><path d="M2.5,3.5 H6.5 M2.5,5.5 H9.5 M2.5,7.5 H9.5 M2.5,9.5 H9.5 M2.5,11.5 H9.5 M2.5,13.5 H9.5" stroke="#8f8f8f" stroke-width="1"/></svg><div class="t" style="left:32px">텍스트 문서</div></div>
    <div class="mi" style="top:227px"><svg style="left:6px;top:3px" width="17" height="18" viewBox="0 0 17 18"><path d="M5,0.5 H12 L16.5,5 V16 Q16.5,17.5 15,17.5 H5 Q4,17.5 4,16.5 V1.5 Q4,0.5 5,0.5 Z" fill="#fff" stroke="#7a7a7a" stroke-width="1"/><path d="M10,7 H14 M10,9.5 H14 M10,12 H14" stroke="#1d8f4e" stroke-width="1.1"/><rect x="0" y="4.5" width="9" height="9" fill="#1d7044"/><path d="M2.2,6.5 L6.8,11.5 M6.8,6.5 L2.2,11.5" fill="none" stroke="#fff" stroke-width="1.2"/></svg><div class="t" style="left:32px;top:5px">Microsoft Excel 워크시트</div></div>
    <div class="mi" style="top:251px"><svg style="left:6px;top:3px" width="17" height="17" viewBox="0 0 17 17"><path d="M0,9 A8.5,8.5 0 0 1 17,9 Z" fill="#1a84e0"/><path d="M4.5,1.5 L8,5.2 L6.6,5.8 L11.8,8.6 L9.6,8.9 L5.8,7.2 L6.4,6.1 Z" fill="#fff"/><rect x="0" y="9.5" width="17" height="7.5" fill="#1b1b1b"/><text x="8.5" y="16.2" font-family="Liberation Sans" font-size="7.6" font-weight="bold" fill="#fff" text-anchor="middle" letter-spacing="0.3">ZIP</text></svg><div class="t" style="left:32px">압축(ZIP) 파일</div></div>
  </div>
</div>
<div id="frame"></div>
</body></html>
